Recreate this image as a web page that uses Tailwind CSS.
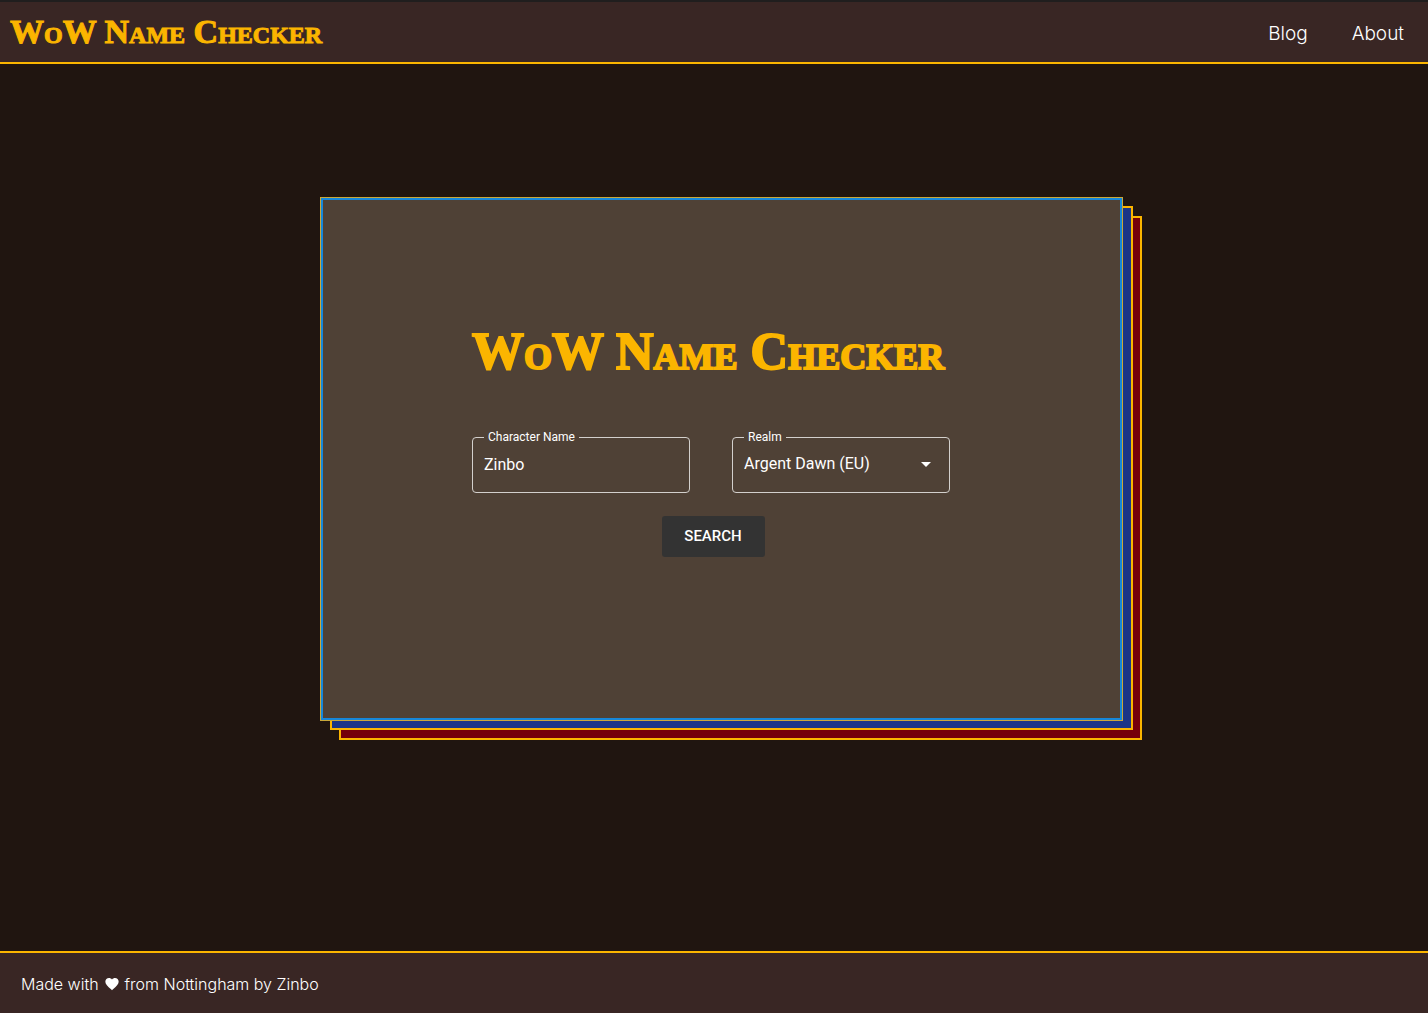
<!DOCTYPE html>
<html lang="en">
<head>
<meta charset="utf-8">
<meta name="viewport" content="width=device-width, initial-scale=1">
<title>WoW Name Checker</title>
<script src="https://cdn.jsdelivr.net/npm/@tailwindcss/browser@4"></script>
</head>
<body class="flex min-h-screen flex-col bg-[#201510] font-['Inter',sans-serif] font-light text-white">
  <header class="flex h-16 items-center justify-between border-t-2 border-b-2 border-t-[#201e1e] border-b-[#fbb500] bg-[#392624] pr-6 pl-[10px]">
    <a href="#" class="font-['Liberation_Serif',serif] text-[34px] leading-none font-bold whitespace-nowrap text-[#fbb500] [-webkit-text-stroke:1px_#fbb500] [font-variant-caps:small-caps]">WoW Name Checker</a>
    <nav class="flex gap-11 pt-[3px] text-[19px] leading-7">
      <a href="#">Blog</a>
      <a href="#">About</a>
    </nav>
  </header>

  <main class="flex flex-1 flex-col items-center px-6 pt-[134px] pb-[231px]">
    <section class="ml-[14px] w-full max-w-[801px] flex-1 border-2 border-[#1687d9] bg-[#4f4136] shadow-[0_0_0_1px_#c9a83a,10px_9px_0_-1px_#1b3587,10px_9px_0_1px_#fbb500,19px_19px_0_-1px_#76000a,19px_19px_0_1px_#fbb500]">
      <form class="mx-auto flex w-[498px] max-w-full flex-col pt-[118px] pr-5 font-['Roboto',sans-serif] font-normal">
        <h1 class="font-['Liberation_Serif',serif] text-[52px] leading-[68px] font-bold whitespace-nowrap text-[#fbb500] [-webkit-text-stroke:2px_#fbb500] [font-variant-caps:small-caps]">WoW Name Checker</h1>
        <div class="mt-[45px] grid grid-cols-2 gap-[42px]">
          <fieldset class="h-[62px] min-w-0 rounded border border-[#d3d0cd] px-[11px]">
            <legend class="px-1 text-xs leading-3"><label for="name">Character Name</label></legend>
            <input id="name" type="text" value="Zinbo" class="block h-[42px] w-full bg-transparent text-base outline-none">
          </fieldset>
          <fieldset class="relative h-[62px] min-w-0 rounded border border-[#d3d0cd] px-[11px]">
            <legend class="px-1 text-xs leading-3"><label for="realm">Realm</label></legend>
            <select id="realm" class="block h-[42px] w-full appearance-none bg-transparent text-base outline-none">
              <option>Argent Dawn (EU)</option>
            </select>
            <svg class="pointer-events-none absolute top-[9px] right-[11px] size-6" viewBox="0 0 24 24" fill="currentColor" aria-hidden="true"><path d="M7 10l5 5 5-5z"/></svg>
          </fieldset>
        </div>
        <button type="button" class="mt-[23px] ml-1 h-[41px] w-[103px] self-center rounded-[3px] bg-[#333] text-[15px] font-medium">SEARCH</button>
      </form>
    </section>
  </main>

  <footer class="flex h-[62px] items-center border-t-2 border-[#fbb500] bg-[#392624] px-[21px] pt-[2px]">
    <p class="flex items-center gap-[5px] text-base">Made with
      <svg class="size-4" viewBox="0 0 24 24" fill="currentColor" role="img" aria-label="love"><path d="M12 21.35l-1.45-1.32C5.4 15.36 2 12.28 2 8.5 2 5.42 4.42 3 7.5 3c1.74 0 3.41.81 4.5 2.09C13.09 3.81 14.76 3 16.5 3 19.58 3 22 5.42 22 8.5c0 3.78-3.4 6.86-8.55 11.54z"/></svg>
      from Nottingham by Zinbo</p>
  </footer>
</body>
</html>
